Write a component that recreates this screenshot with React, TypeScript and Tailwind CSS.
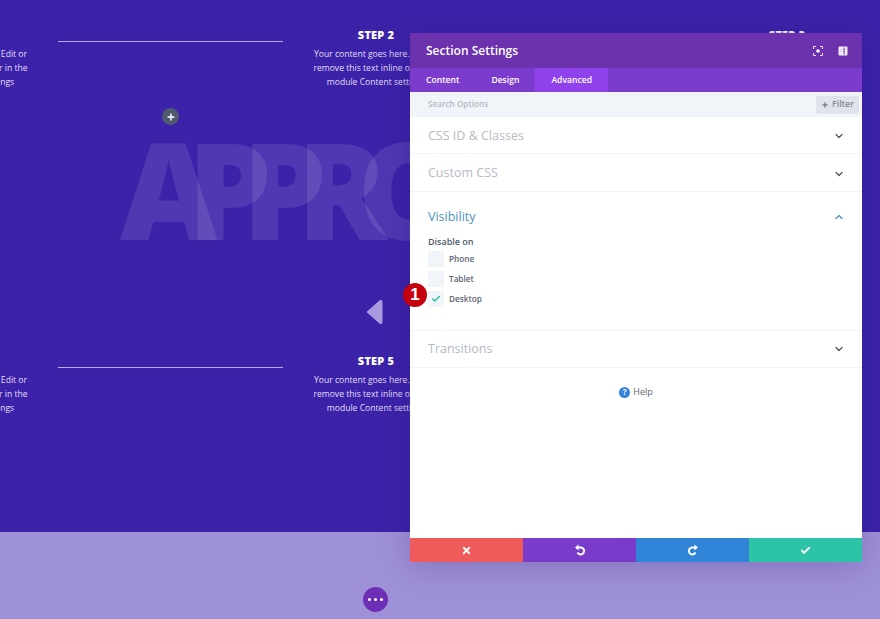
import { ChevronDown, ChevronUp, Plus, Check, X } from 'lucide-react'

const font = "font-['Open_Sans',sans-serif]"

function Step({ title }: { title: string }) {
  return (
    <div className="w-[186px] shrink-0 text-center">
      <h4 className="text-[11px] leading-[14px] font-extrabold tracking-[0.2px] text-white">{title}</h4>
      <p className="mt-[5px] text-[8.6px] leading-[14.2px] text-[#e3def6]">
        Your content goes here. Edit or
        <br />
        remove this text inline or in the
        <br />
        module Content settings
      </p>
    </div>
  )
}

function Divider({ children }: { children?: React.ReactNode }) {
  return (
    <div className="flex w-[225px] shrink-0 flex-col items-center pt-[13px]">
      <div className="h-px w-full bg-[#b7a9f2]" />
      {children}
    </div>
  )
}

function Row({ first, second, third, children }: { first: string; second: string; third: string; children?: React.ReactNode }) {
  return (
    <div className="ml-[-128px] flex w-[1008px]">
      <Step title={first} />
      <Divider>{children}</Divider>
      <Step title={second} />
      <Divider />
      <Step title={third} />
    </div>
  )
}

function Section({ title, className = 'h-[37px] pt-[2px]' }: { title: string; className?: string }) {
  return (
    <div className={`flex items-center justify-between border-b border-[#f4f5f7] pr-[17px] pl-[18px] ${className}`}>
      <span className="text-[12.5px] text-[#b4bac5]">{title}</span>
      <ChevronDown size={12} strokeWidth={2.6} className="text-[#4c5866]" />
    </div>
  )
}

function Option({ label, checked }: { label: string; checked?: boolean }) {
  return (
    <div className="flex h-[20px] items-center gap-[5px]">
      <span className="flex h-[16px] w-[16px] items-center justify-center bg-[#f1f4f9]">
        {checked && <Check size={10} strokeWidth={3.6} className="text-[#2cc3a6]" />}
      </span>
      <span className="text-[8.2px] font-semibold text-[#5b6672]">{label}</span>
    </div>
  )
}

// undo arrow, mirrored for redo
function Turn({ className = '' }: { className?: string }) {
  return (
    <svg width="12" height="12" viewBox="0 0 12 12" className={className}>
      <path d="M4 3.500 H7 A3.500 3.500 0 1 1 3.500 8.500" fill="none" stroke="#fff" strokeWidth="2" />
      <path d="M1 3.500 L4.500 .5 V6.500 Z" fill="#fff" />
    </svg>
  )
}

export default function App() {
  const letters = ['A', 'P', 'P', 'R', 'O']

  return (
    <div className={`relative flex h-[619px] w-[880px] flex-col overflow-hidden ${font}`}>
      <main className="relative flex h-[532px] flex-col gap-[229px] bg-[#3b22a8] pt-[28px]">
        {/* big faded word behind the columns */}
        <div className="absolute top-[97px] left-[120px] flex text-[134px] leading-[183px] font-extrabold select-none">
          {letters.map((l, i) => (
            <span key={i} className="mr-[-30px] text-white/10">
              {l}
            </span>
          ))}
        </div>

        <div className="relative">
          <Row first="STEP 1" second="STEP 2" third="STEP 3">
            <span className="mt-[66px] flex h-[17px] w-[17px] items-center justify-center rounded-full bg-[#505a6e] text-white">
              <Plus size={10} strokeWidth={3.5} />
            </span>
          </Row>
        </div>
        <div className="relative">
          <Row first="STEP 4" second="STEP 5" third="STEP 6" />
        </div>

        {/* slider arrow */}
        <svg className="absolute top-[298px] left-[365px]" width="18" height="28" viewBox="0 0 18 28">
          <path d="M2 14 L15 2.5 Q17 1.5 17 4 V24 Q17 26.5 15 25.500 Z" fill="#a99cde" stroke="#a99cde" strokeLinejoin="round" />
        </svg>
      </main>

      <footer className="flex h-[87px] items-end bg-[#9f91d7] pb-[7px] pl-[363px]">
        <span className="flex h-[25px] w-[25px] items-center justify-center gap-[3px] rounded-full bg-[#6d2fb6]">
          <i className="h-[3px] w-[3px] rounded-full bg-white" />
          <i className="h-[3px] w-[3px] rounded-full bg-white" />
          <i className="h-[3px] w-[3px] rounded-full bg-white" />
        </span>
      </footer>

      {/* settings modal */}
      <div className="absolute top-[33px] left-[410px] flex h-[529px] w-[452px] flex-col bg-white shadow-[0_4px_30px_rgba(43,20,120,0.25)]">
        <div className="flex h-[35px] shrink-0 items-center justify-between bg-[#6c32ae] pr-[14px] pl-[16px]">
          <span className="text-[12px] font-semibold text-white">Section Settings</span>
          <div className="flex items-center gap-[15px]">
            <svg width="10" height="10" viewBox="0 0 10 10" fill="none" stroke="#e9dff7" strokeWidth="1">
              <path d="M.5 3V.5H3M7 .5h2.500V3M9.500 7v2.500H7M3 9.500H.5V7" />
              <circle cx="5" cy="5" r="1.800" fill="#fff" stroke="none" />
            </svg>
            <svg width="10" height="10" viewBox="0 0 10 10">
              <rect x=".5" y=".5" width="9" height="9" rx="1" fill="#f3ecfb" />
              <rect x="5.500" y="1.500" width="1.200" height="7" fill="#7d4bb8" />
              <rect x="2" y="3" width="2.400" height=".7" fill="#c9b0e6" />
              <rect x="2" y="5" width="2.400" height=".7" fill="#c9b0e6" />
            </svg>
          </div>
        </div>

        <div className="flex h-[24px] shrink-0 bg-[#7b3bcc] text-[8.600px] font-semibold text-white">
          <span className="flex items-center pr-[16px] pl-[16px]">Content</span>
          <span className="flex items-center pr-[16px] pl-[16px]">Design</span>
          <span className="flex items-center bg-[#8f42ec] pr-[16px] pl-[16px]">Advanced</span>
        </div>

        <div className="flex h-[25px] shrink-0 items-center justify-between bg-[#f1f5f9] pr-[3px] pl-[18px]">
          <span className="text-[8.200px] font-semibold text-[#b4bac5]">Search Options</span>
          <span className="flex h-[18px] w-[43px] items-center justify-center gap-[3px] rounded-[2px] bg-[#dfe4eb] text-[8.800px] font-semibold text-[#7f8995]">
            <Plus size={8} strokeWidth={3} className="text-[#5b6672]" />
            Filter
          </span>
        </div>

        <Section title="CSS ID & Classes" />
        <Section title="Custom CSS" className="h-[38px] pt-[2px]" />

        <div className="h-[139px] shrink-0 border-b border-[#f4f5f7] pt-[16px] pr-[17px] pl-[18px]">
          <div className="flex items-center justify-between">
            <span className="text-[12.5px] leading-[18px] text-[#4b93bd]">Visibility</span>
            <ChevronUp size={12} strokeWidth={2.6} className="text-[#4b93bd]" />
          </div>
          <p className="mt-[9px] mb-[1px] text-[9px] leading-[13px] font-semibold text-[#4c5866]">Disable on</p>
          <Option label="Phone" />
          <Option label="Tablet" />
          <Option label="Desktop" checked />
        </div>

        <Section title="Transitions" className="h-[37px]" />

        <div className="flex items-center justify-center gap-[3px] pt-[17px]">
          <span className="flex h-[11px] w-[11px] items-center justify-center rounded-full bg-[#2f84d8] text-[8px] leading-none font-bold text-white">?</span>
          <span className="text-[9px] leading-[14px] font-medium text-[#5b6672]">Help</span>
        </div>

        <div className="mt-auto grid h-[24px] shrink-0 grid-cols-4 text-white">
          <span className="flex items-center justify-center bg-[#ef5a5a]">
            <X size={11} strokeWidth={4} />
          </span>
          <span className="flex items-center justify-center bg-[#7a3bca]">
            <Turn />
          </span>
          <span className="flex items-center justify-center bg-[#2f84d8]">
            <Turn className="-scale-x-100" />
          </span>
          <span className="flex items-center justify-center bg-[#2cc3a6]">
            <Check size={11} strokeWidth={4} />
          </span>
        </div>
      </div>

      {/* step number badge */}
      <span className="absolute top-[283px] left-[403px] flex h-[24px] w-[24px] items-center justify-center rounded-full bg-[#c4000f] font-['Liberation_Sans',sans-serif] text-[17px] font-bold text-white">
        1
      </span>
    </div>
  )
}
